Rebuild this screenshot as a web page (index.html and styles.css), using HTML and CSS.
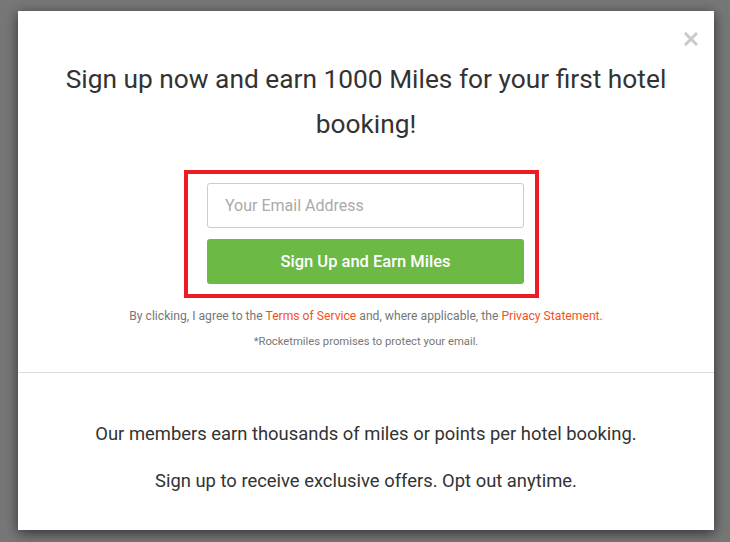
FILE: index.html
```html
<!DOCTYPE html>
<html>
<head>
<meta charset="utf-8">
<link rel="stylesheet" href="styles.css">
</head>
<body>
<div class="modal">
  <button class="close" aria-label="Close">
    <svg width="14" height="14" viewBox="0 0 14 14"><path d="M2 2 L12 12 M12 2 L2 12" stroke="#c9c9c9" stroke-width="3" stroke-linecap="square"/></svg>
  </button>
  <div class="top">
    <h1 class="title">Sign up now and earn 1000 Miles for your first hotel booking!</h1>
    <div class="highlight">
      <form class="form">
        <input class="email" type="text" placeholder="Your Email Address">
        <button class="submit" type="button">Sign Up and Earn Miles</button>
      </form>
    </div>
    <p class="terms">By clicking, I agree to the <a href="#">Terms of Service</a> and, where applicable, the <a href="#">Privacy Statement</a>.</p>
    <p class="promise">*Rocketmiles promises to protect your email.</p>
  </div>
  <div class="bottom">
    <p class="info">Our members earn thousands of miles or points per hotel booking.</p>
    <p class="info">Sign up to receive exclusive offers. Opt out anytime.</p>
  </div>
</div>
</body>
</html>
```
FILE: styles.css
```css
html, body {
  margin: 0;
  padding: 0;
}
body {
  background: #777777;
  width: 730px;
  height: 542px;
  padding: 11px 0 0 18px;
  box-sizing: border-box;
  font-family: Roboto, "Liberation Sans", sans-serif;
  overflow: hidden;
}
.modal {
  position: relative;
  width: 696px;
  height: 519px;
  background: #fff;
  box-shadow: 0 3px 12px rgba(0, 0, 0, 0.6);
  display: flex;
  flex-direction: column;
}
.close {
  position: absolute;
  top: 21px;
  right: 16px;
  padding: 0;
  border: 0;
  background: none;
  width: 14px;
  height: 14px;
  line-height: 0;
}
.top {
  display: flex;
  flex-direction: column;
  align-items: center;
  padding-top: 46px;
  border-bottom: 1px solid #dddddd;
  height: 362px;
  box-sizing: border-box;
}
.title {
  margin: 0;
  width: 640px;
  text-align: center;
  font-size: 26.3px;
  font-weight: 400;
  line-height: 45px;
  color: #333333;
}
.highlight {
  margin: 23px 9px 0 0;
  width: 355px;
  height: 128px;
  box-sizing: border-box;
  border: 4px solid #ed1c24;
  padding: 9px 11px 0 19px;
}
.form {
  display: flex;
  flex-direction: column;
  gap: 11px;
}
.email {
  width: 317px;
  height: 45px;
  box-sizing: border-box;
  border: 1px solid #cccccc;
  border-radius: 3px;
  padding: 0 17px;
  font-family: inherit;
  font-size: 16px;
  color: #333;
  outline: none;
}
.email::placeholder {
  color: #aaaaaa;
}
.submit {
  width: 317px;
  height: 45px;
  border: 0;
  border-radius: 3px;
  background: #6cb946;
  color: #ffffff;
  font-family: inherit;
  font-size: 16.5px;
  font-weight: 500;
  padding: 0;
}
.terms {
  margin: 10px 0 0;
  font-size: 12.15px;
  line-height: 16px;
  color: #777777;
}
.terms a {
  color: #f4511e;
  text-decoration: none;
}
.promise {
  margin: 10px 0 0;
  font-size: 11.25px;
  line-height: 16px;
  color: #777777;
}
.bottom {
  display: flex;
  flex-direction: column;
  align-items: center;
  padding-top: 49px;
  gap: 23px;
}
.info {
  margin: 0;
  font-size: 18.4px;
  line-height: 24px;
  color: #333333;
}
```
